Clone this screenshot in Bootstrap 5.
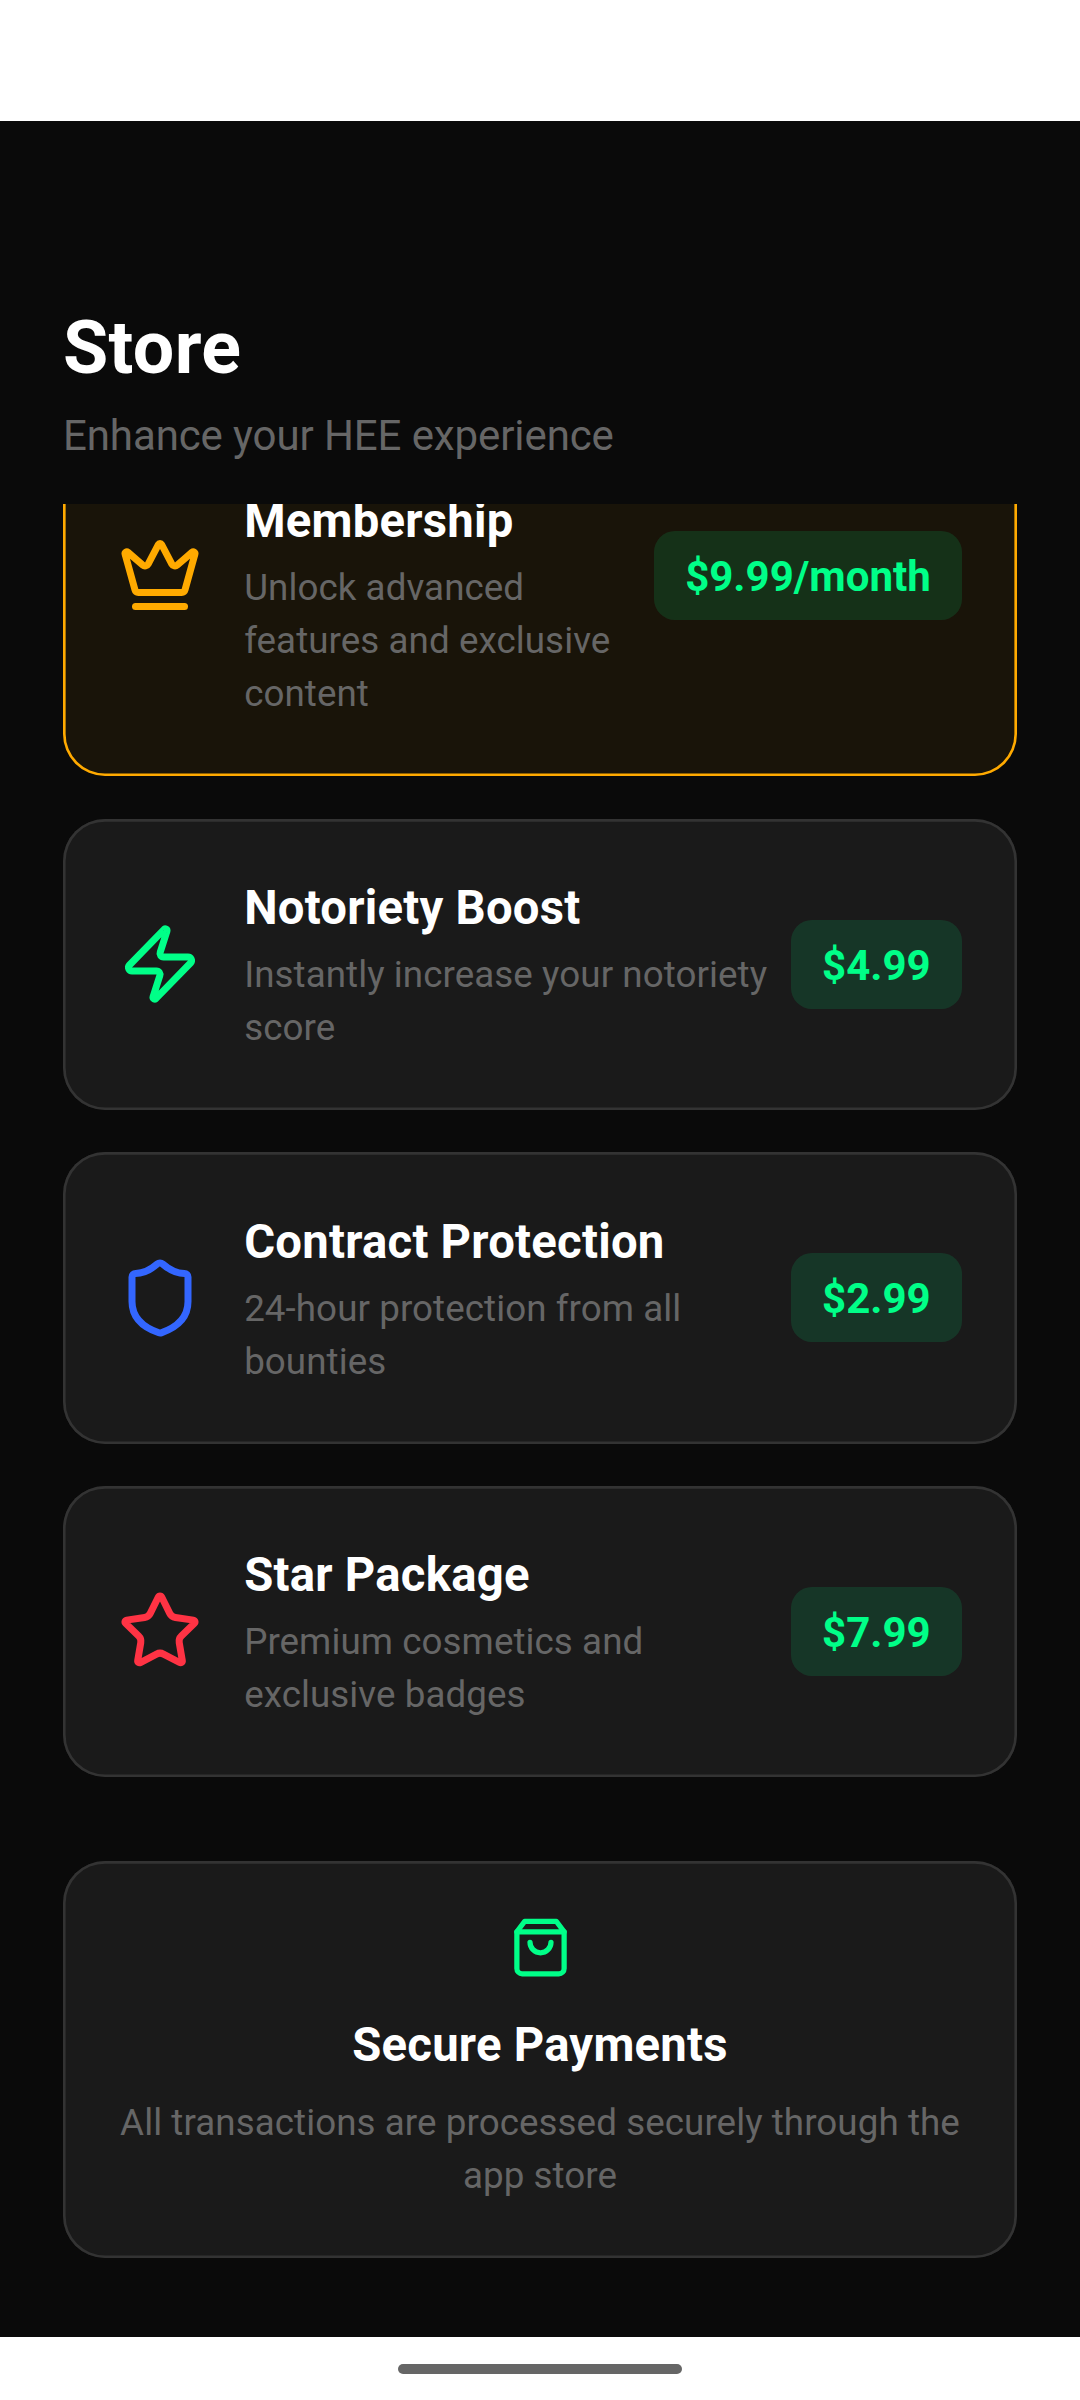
<!DOCTYPE html>
<html lang="en">
<head>
<meta charset="utf-8">
<meta name="viewport" content="width=device-width, initial-scale=1">
<title>Store</title>
<link href="https://cdn.jsdelivr.net/npm/bootstrap@5.3.0/dist/css/bootstrap.min.css" rel="stylesheet">
<style>
  body { font-family: Roboto, "Liberation Sans", sans-serif; background: #fff; }
  .screen { height: 2400px; }
  .status-area { height: 121px; }
  .store-header { background: #0a0a0a; height: 383px; padding: 184px 63px 0; }
  .store-title { font-size: 73.5px; line-height: 86px; letter-spacing: .35px; color: #fff; margin-bottom: 20px; }
  .store-subtitle { font-size: 42px; line-height: 50px; letter-spacing: -.1px; color: #666; }
  .store-list { background: #0a0a0a; padding: 0 63px 79.4px; gap: 42px; min-height: 0; }
  .store-card { border: 0; border-radius: 42px; background: #1a1a1a; box-shadow: inset 0 0 0 2.625px #333; padding: 55.125px; }
  .store-card.premium { background: rgba(255,170,0,.0627); box-shadow: inset 0 0 0 2.625px #ffaa00; margin-bottom: .8px; }
  .item-icon { width: 84px; height: 84px; margin-right: 42px; }
  .bag-icon { width: 63px; height: 63px; }
  svg { fill: none; stroke: currentColor; stroke-width: 2; stroke-linecap: round; stroke-linejoin: round; }
  .tone-gold { color: #ffaa00; }
  .tone-green { color: #00ff88; }
  .tone-blue { color: #3366ff; }
  .tone-red { color: #ff3344; }
  .item-text { padding: 6.5px 0 .8px; min-width: 0; }
  .premium .item-text { padding-top: 63.4px; }
  .item-name { font-size: 47.25px; line-height: 57.7px; letter-spacing: .25px; font-weight: 700; color: #fff; margin-bottom: 10.2px; }
  .item-desc { font-size: 36.75px; line-height: 53px; letter-spacing: .07px; color: #666; }
  .price { border-radius: 21px; background: rgba(0,255,136,.125); color: #00ff88; font-size: 42px; line-height: 57px; font-weight: 700; padding: 17px 31.2px 15px; white-space: nowrap; }
  .secure-note { margin-top: 42px; }
  .secure-note .item-name { margin: 37.65px 0 22px; }
  .nav-area { height: 63px; padding-top: 27px; }
  .nav-handle { width: 284px; height: 10px; border-radius: 5px; background: #666; }
</style>
</head>
<body>
<div class="screen d-flex flex-column overflow-hidden">
  <div class="status-area flex-shrink-0"></div>
  <header class="store-header flex-shrink-0">
    <h1 class="store-title fw-bold">Store</h1>
    <p class="store-subtitle mb-0">Enhance your HEE experience</p>
  </header>

  <!-- The list is scrolled to its end, so its first card runs under the header -->
  <main class="store-list flex-grow-1 d-flex flex-column justify-content-end overflow-hidden">
    <div class="card store-card premium flex-row align-items-center flex-shrink-0">
      <svg class="item-icon tone-gold flex-shrink-0" viewBox="0 0 24 24"><path d="M11.562 3.266a.5.5 0 0 1 .876 0L15.39 8.87a1 1 0 0 0 1.516.294L21.183 5.5a.5.5 0 0 1 .798.519l-2.834 10.246a1 1 0 0 1-.956.734H5.81a1 1 0 0 1-.957-.734L2.02 6.02a.5.5 0 0 1 .798-.519l4.276 3.664a1 1 0 0 0 1.516-.294z"/><path d="M5 21h14"/></svg>
      <div class="item-text flex-fill">
        <h2 class="item-name">Membership</h2>
        <p class="item-desc mb-0">Unlock advanced features and exclusive content</p>
      </div>
      <div class="price flex-shrink-0">$9.99/month</div>
    </div>

    <div class="card store-card flex-row align-items-center flex-shrink-0">
      <svg class="item-icon tone-green flex-shrink-0" viewBox="0 0 24 24"><path d="M4 14a1 1 0 0 1-.78-1.63l9.9-10.2a.5.5 0 0 1 .86.46l-1.92 6.02A1 1 0 0 0 13 10h7a1 1 0 0 1 .78 1.63l-9.9 10.2a.5.5 0 0 1-.86-.46l1.92-6.02A1 1 0 0 0 11 14z"/></svg>
      <div class="item-text flex-fill">
        <h2 class="item-name">Notoriety Boost</h2>
        <p class="item-desc mb-0">Instantly increase your notoriety score</p>
      </div>
      <div class="price flex-shrink-0">$4.99</div>
    </div>

    <div class="card store-card flex-row align-items-center flex-shrink-0">
      <svg class="item-icon tone-blue flex-shrink-0" viewBox="0 0 24 24"><path d="M20 13c0 5-3.5 7.5-7.66 8.95a1 1 0 0 1-.67-.01C7.5 20.5 4 18 4 13V6a1 1 0 0 1 1-1c2 0 4.5-1.2 6.24-2.72a1.17 1.17 0 0 1 1.52 0C14.51 3.81 17 5 19 5a1 1 0 0 1 1 1z"/></svg>
      <div class="item-text flex-fill">
        <h2 class="item-name">Contract Protection</h2>
        <p class="item-desc mb-0">24-hour protection from all bounties</p>
      </div>
      <div class="price flex-shrink-0">$2.99</div>
    </div>

    <div class="card store-card flex-row align-items-center flex-shrink-0">
      <svg class="item-icon tone-red flex-shrink-0" viewBox="0 0 24 24"><path d="M11.525 2.295a.53.53 0 0 1 .95 0l2.31 4.679a2.123 2.123 0 0 0 1.595 1.16l5.166.756a.53.53 0 0 1 .294.904l-3.736 3.638a2.123 2.123 0 0 0-.611 1.878l.882 5.14a.53.53 0 0 1-.771.56l-4.618-2.428a2.122 2.122 0 0 0-1.973 0L6.396 21.01a.53.53 0 0 1-.77-.56l.881-5.139a2.122 2.122 0 0 0-.611-1.879L2.16 9.795a.53.53 0 0 1 .294-.906l5.165-.755a2.122 2.122 0 0 0 1.597-1.16z"/></svg>
      <div class="item-text flex-fill">
        <h2 class="item-name">Star Package</h2>
        <p class="item-desc mb-0">Premium cosmetics and exclusive badges</p>
      </div>
      <div class="price flex-shrink-0">$7.99</div>
    </div>

    <div class="card store-card secure-note align-items-center text-center flex-shrink-0">
      <svg class="bag-icon tone-green" viewBox="0 0 24 24"><path d="M6 2 3 6v14a2 2 0 0 0 2 2h14a2 2 0 0 0 2-2V6l-3-4Z"/><path d="M3 6h18"/><path d="M16 10a4 4 0 0 1-8 0"/></svg>
      <h2 class="item-name">Secure Payments</h2>
      <p class="item-desc mb-0">All transactions are processed securely through the app store</p>
    </div>
  </main>

  <div class="nav-area flex-shrink-0 d-flex justify-content-center">
    <div class="nav-handle"></div>
  </div>
</div>
<script src="https://cdn.jsdelivr.net/npm/bootstrap@5.3.0/dist/js/bootstrap.bundle.min.js"></script>
</body>
</html>
